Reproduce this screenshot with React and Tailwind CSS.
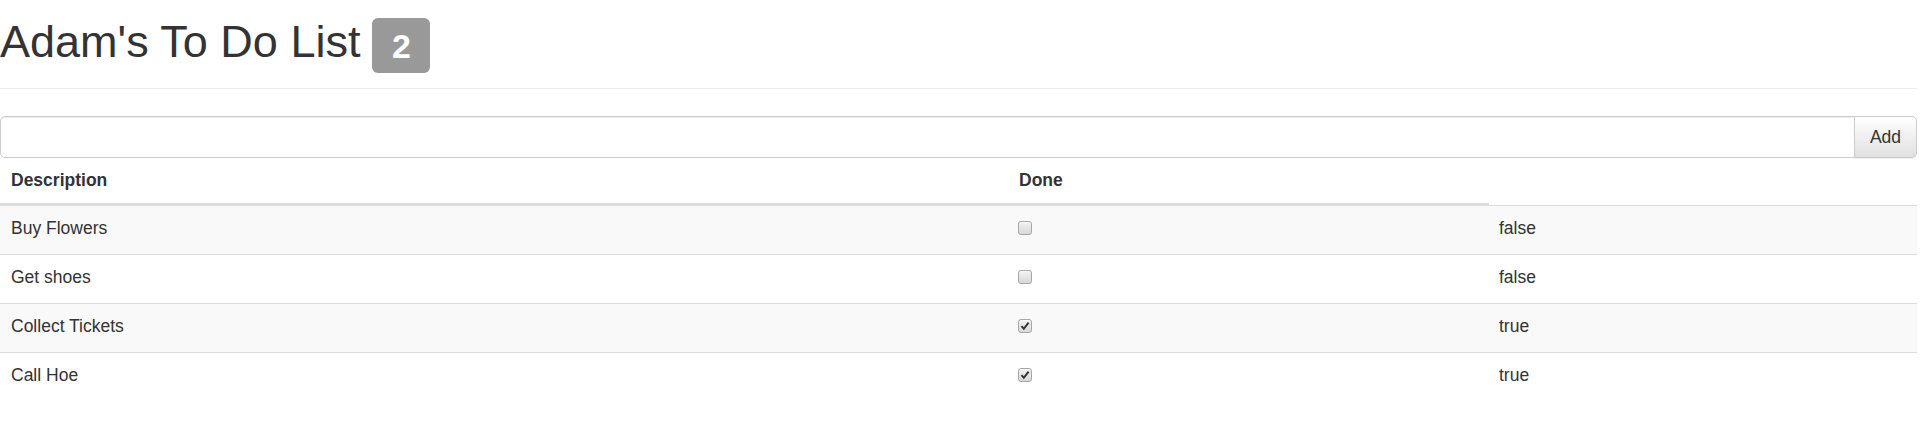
import { useState } from 'react'

const initialItems = [
  { action: 'Buy Flowers', done: false },
  { action: 'Get shoes', done: false },
  { action: 'Collect Tickets', done: true },
  { action: 'Call Hoe', done: true },
]

function CheckBox({ checked, onChange }) {
  return (
    <button
      type="button"
      onClick={onChange}
      className="flex items-center justify-center w-[14px] h-[14px] rounded-[3px] border border-[#a6a6a6] bg-gradient-to-b from-[#f2f2f2] to-[#d8d8d8] shadow-[inset_0_1px_0_rgba(255,255,255,0.6)] p-0"
    >
      {checked && (
        <svg width="10" height="10" viewBox="0 0 10 10">
          <path d="M1.5 5.2 L3.8 7.8 L8.6 1.6" fill="none" stroke="#333" strokeWidth="2" />
        </svg>
      )}
    </button>
  )
}

export default function App() {
  const [items, setItems] = useState(initialItems)
  const [newItem, setNewItem] = useState('')

  const remaining = items.filter((i) => !i.done).length

  const toggle = (idx) => {
    setItems((prev) => prev.map((it, i) => (i === idx ? { ...it, done: !it.done } : it)))
  }

  const addItem = () => {
    const text = newItem.trim()
    if (!text) return
    setItems((prev) => [...prev, { action: text, done: false }])
    setNewItem('')
  }

  return (
    <div className="w-[1917px] bg-white text-[#333] text-[17.5px] leading-[25px] font-['Liberation_Sans',Arial,sans-serif]">
      <div className="pt-[17px] pb-[15px] border-b border-[#eee]">
        <h1 className="flex items-start text-[45px] leading-[50px] font-normal">
          <span>Adam's To Do List</span>
          <span className="ml-[12px] mt-[1px] flex items-center justify-center w-[58px] h-[55px] rounded-[6px] bg-[#999] text-white text-[34px] font-bold leading-none">
            {remaining}
          </span>
        </h1>
      </div>

      <div className="mt-[27px] flex h-[42px]">
        <input
          value={newItem}
          onChange={(e) => setNewItem(e.target.value)}
          className="flex-1 h-full border border-[#ccc] rounded-l-[5px] px-[15px] outline-none shadow-[inset_0_1px_1px_rgba(0,0,0,0.075)]"
        />
        <button
          type="button"
          onClick={addItem}
          className="w-[63px] h-full -ml-px border border-[#ccc] rounded-r-[5px] bg-gradient-to-b from-white to-[#e0e0e0] text-[#333] shadow-[0_1px_1px_rgba(0,0,0,0.075)]"
        >
          Add
        </button>
      </div>

      <div className="rounded-b-[5px] shadow-[0_1px_1px_rgba(0,0,0,0.06)]">
        <div className="flex font-bold">
          <div className="w-[1009px] pl-[11px] pt-[10px] pb-[10px] border-b-2 border-[#ddd]">Description</div>
          <div className="w-[480px] pl-[10px] pt-[10px] pb-[10px] border-b-2 border-[#ddd]">Done</div>
        </div>
        {items.map((item, idx) => (
          <div
            key={idx}
            className={`flex h-[49px] border-t border-[#ddd] ${idx % 2 === 0 ? 'bg-[#f9f9f9]' : 'bg-white'}`}
          >
            <div className="w-[1009px] pl-[11px] pt-[10px]">{item.action}</div>
            <div className="w-[480px] pl-[9px] pt-[15px]">
              <CheckBox checked={item.done} onChange={() => toggle(idx)} />
            </div>
            <div className="flex-1 pl-[10px] pt-[10px]">{item.done ? 'true' : 'false'}</div>
          </div>
        ))}
      </div>
    </div>
  )
}
